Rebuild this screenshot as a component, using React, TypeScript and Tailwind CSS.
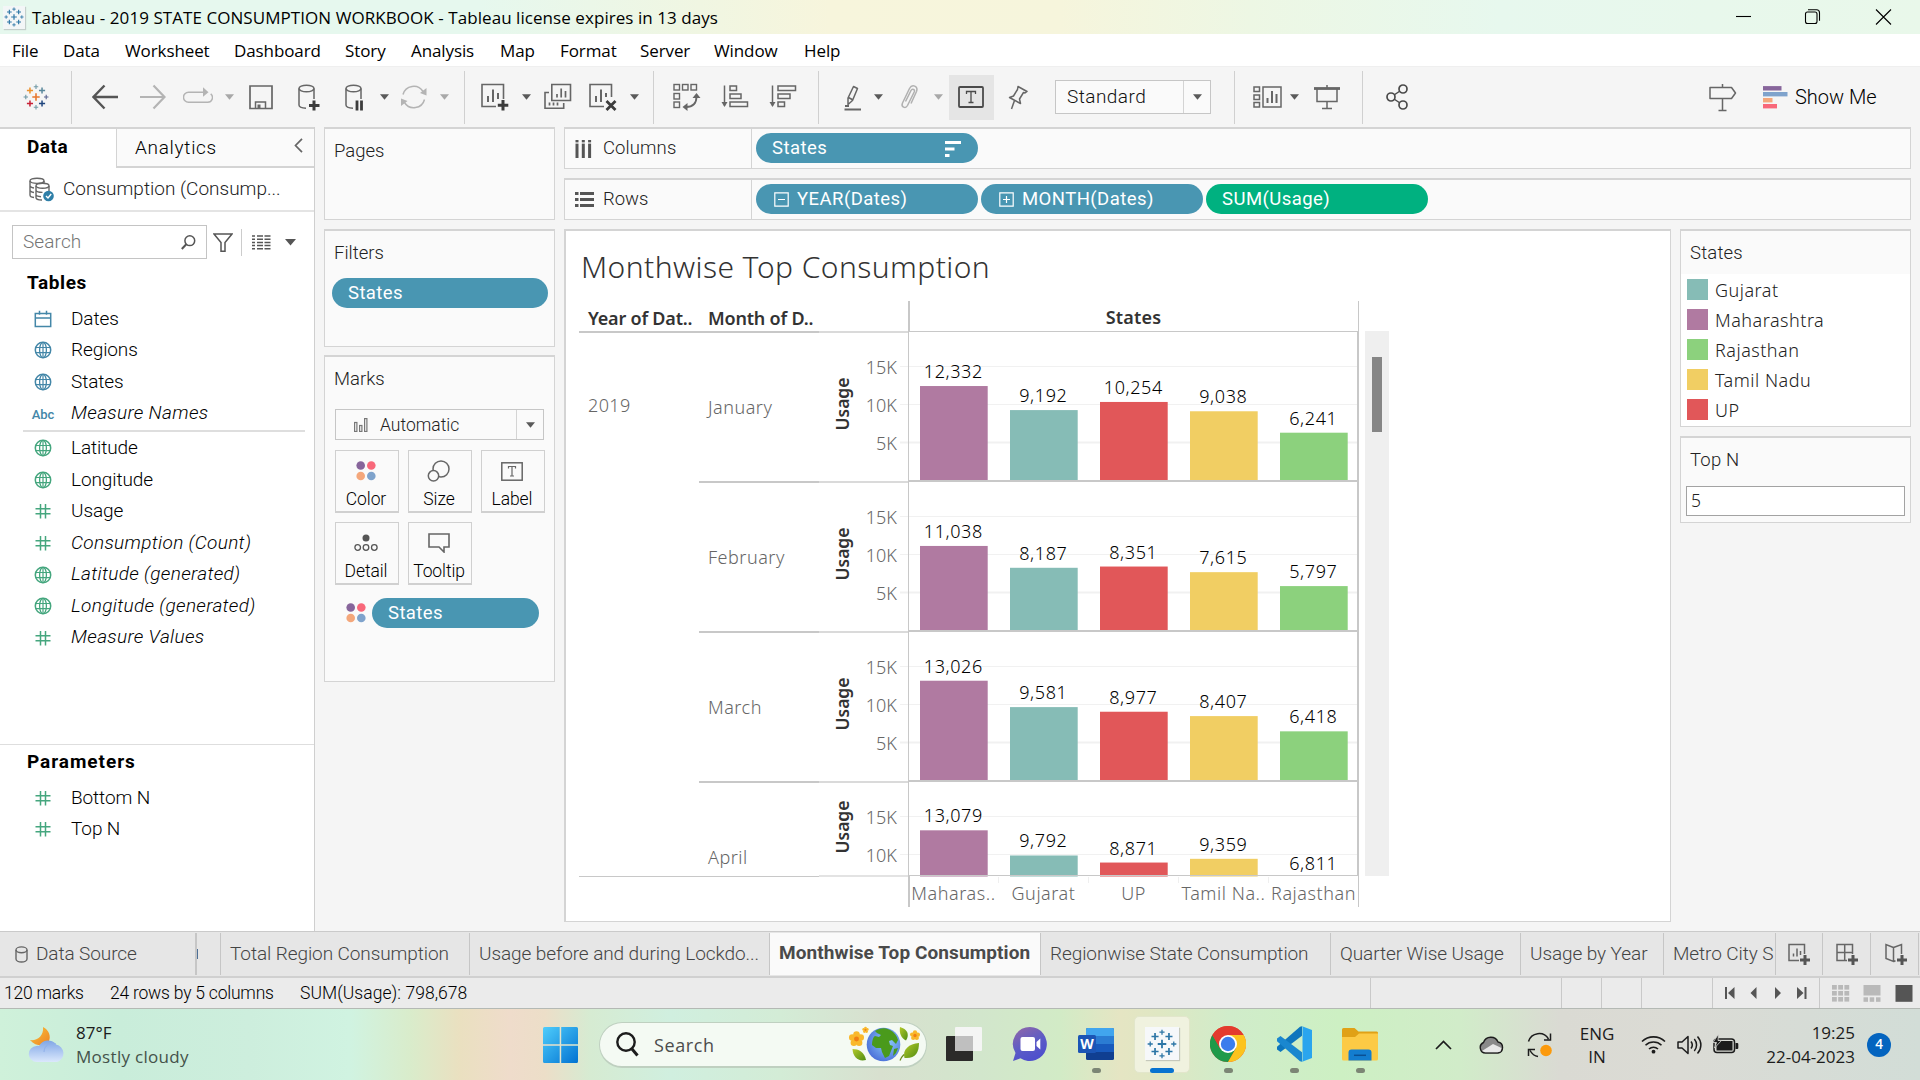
import React from "react";

/* ---------- shared helpers ---------- */

function Svg({ w, h = 30, className = "", children }: { w: number; h?: number; className?: string; children: React.ReactNode }) {
  return (
    <svg width={w} height={h} viewBox={`0 0 ${w} ${h}`} fill="none" className={`shrink-0 ${className}`}>
      {children}
    </svg>
  );
}

function Caret({ className = "", fill = "#5a5a5a" }: { className?: string; fill?: string }) {
  return (
    <svg width="9" height="6" viewBox="0 0 9 6" className={`shrink-0 ${className}`}>
      <path d="M0 0.3h9L4.5 5.8z" fill={fill} />
    </svg>
  );
}

function Sep({ className = "" }: { className?: string }) {
  return <div className={`h-[53px] w-px shrink-0 bg-[#d0d0d0] ${className}`} />;
}

const G = "#666666";

function plus(cx: number, cy: number, r: number, c: string, sw: number) {
  return <path key={`${cx}-${cy}`} d={`M${cx - r} ${cy}h${r * 2}M${cx} ${cy - r}v${r * 2}`} stroke={c} strokeWidth={sw} />;
}

function TableauMark({ size, mono = false, className = "" }: { size: number; mono?: boolean; className?: string }) {
  const b = "#2d76a6";
  const c = (x: string) => (mono ? b : x);
  return (
    <svg width={size} height={size} viewBox="0 0 28 28" fill="none" className={`shrink-0 ${className}`}>
      {plus(14, 14, 4, c("#e8762d"), 1.7)}
      {plus(7.5, 7, 3.3, c("#eb912c"), 1.6)}
      {plus(20.5, 7, 3.3, c("#59879b"), 1.6)}
      {plus(7.5, 21, 3.3, c("#c72035"), 1.6)}
      {plus(20.5, 21, 3.3, c("#1f457e"), 1.6)}
      {plus(14, 3, 2.4, c("#7199a6"), 1.2)}
      {plus(14, 25, 2.4, c("#7199a6"), 1.2)}
      {plus(3, 14, 2.4, c("#7199a6"), 1.2)}
      {plus(25, 14, 2.4, c("#5b6591"), 1.2)}
    </svg>
  );
}

/* ---------- title bar and menu ---------- */

function TitleBar() {
  return (
    <div className="flex h-[34px] items-center bg-[linear-gradient(90deg,#e6f8ee_0px,#e6f8ee_480px,#f0f6e2_700px,#f7f5dc_830px,#f6f5dc_1060px,#edf7e4_1250px,#e7f8ee_1500px,#e9f8ea_1920px)]">
      <div className="ml-[3px] flex h-[23px] w-[22px] items-center justify-center bg-[#f3f6f7] shadow-[1px_1px_1px_#c4cfcb]">
        <TableauMark size={20} mono />
      </div>
      <div className="ml-[7px] pt-[2px] font-['Open_Sans',sans-serif] text-[17px] tracking-[0.06px] text-black">
        Tableau - 2019 STATE CONSUMPTION WORKBOOK - Tableau license expires in 13 days
      </div>
      <svg width="160" height="18" viewBox="0 0 160 18" fill="none" className="ml-auto mr-[27px]" stroke="#000" strokeWidth="1.1">
        <path d="M3 8.5h15" />
        <rect x="72.5" y="4" width="11.5" height="11.5" rx="2" />
        <path d="M75 1.8h8.5a3 3 0 0 1 3 3v8" />
        <path d="M143 1.5l15 15M158 1.5l-15 15" />
      </svg>
    </div>
  );
}

function MenuBar() {
  return (
    <div className="flex h-[32px] items-center bg-white pt-px pl-[12px] font-['Open_Sans',sans-serif] text-[17px] tracking-[-0.1px] text-black">
      <span className="w-[51px]">File</span>
      <span className="w-[62px]">Data</span>
      <span className="w-[109px]">Worksheet</span>
      <span className="w-[111px]">Dashboard</span>
      <span className="w-[66px]">Story</span>
      <span className="w-[89px]">Analysis</span>
      <span className="w-[60px]">Map</span>
      <span className="w-[80px]">Format</span>
      <span className="w-[74px]">Server</span>
      <span className="w-[90px]">Window</span>
      <span>Help</span>
    </div>
  );
}

/* ---------- toolbar ---------- */

function Toolbar() {
  return (
    <div className="flex h-[61px] items-center border-t border-[#efefef] bg-[#f5f5f5]">
      <TableauMark size={26} className="ml-[23px]" />
      <Sep className="ml-[22px]" />
      <Svg w={26} className="ml-[20px]">
        <path d="M12.5 3.5L1.5 15l11 11.5M2 15h24" stroke="#555" strokeWidth="2.4" />
      </Svg>
      <Svg w={26} className="ml-[22px]">
        <path d="M13.5 3.5l11 11.5-11 11.5M0 15h24" stroke="#b4b4b4" strokeWidth="2.2" />
      </Svg>
      <Svg w={30} className="ml-[17px]">
        <path d="M21 10.300H5.500a5 5 0 0 0 0 10h19a4.800 4.800 0 0 0 3.200-8.500" stroke="#b4b4b4" strokeWidth="1.500" />
        <path d="M20 5.300l5.500 5-5.500 4.500z" fill="#b4b4b4" />
      </Svg>
      <Caret className="ml-[12px]" fill="#a8a8a8" />
      <Svg w={24} className="ml-[15px]">
        <path d="M1 4h22v22.500H1z" stroke={G} strokeWidth="1.7" />
        <path d="M6.500 26.500v-6.500h10v6.500" stroke={G} strokeWidth="1.500" />
        <path d="M8.500 22.500h3v4h-3z" fill={G} />
      </Svg>
      <Svg w={22} className="ml-[25px]">
        <ellipse cx="8.500" cy="6.500" rx="7.500" ry="3.300" stroke={G} strokeWidth="1.500" />
        <path d="M1 6.500v16.500c0 2 3.500 3 7 3.200M16 6.500V17" stroke={G} strokeWidth="1.500" />
        <path d="M16 18.500v10M11 23.500h10.500" stroke="#3c3c3c" strokeWidth="3" />
      </Svg>
      <Svg w={20} className="ml-[25px]">
        <ellipse cx="8.500" cy="6.500" rx="7.500" ry="3.300" stroke={G} strokeWidth="1.500" />
        <path d="M1 6.500v16.500c0 2 3.500 3 7 3.200M16 6.500V17" stroke={G} strokeWidth="1.500" />
        <path d="M12 18.500v10M16.500 18.500v10" stroke="#3c3c3c" strokeWidth="2.800" />
      </Svg>
      <Caret className="ml-[15px]" />
      <Svg w={26} className="ml-[12px]">
        <path d="M2 12.500A11 11 0 0 1 22 9.500M23.500 17.500A11 11 0 0 1 3.500 20.500" stroke="#b4b4b4" strokeWidth="1.500" />
        <path d="M25.500 6v7.500l-6.500-2.500zM0 24v-7.500l6.500 2.500z" fill="#b4b4b4" />
      </Svg>
      <Caret className="ml-[13px]" fill="#a8a8a8" />
      <Sep className="ml-[15px]" />
      <Svg w={28} className="ml-[16px]">
        <path d="M15 24.500H1V2.500h21.500V17" stroke={G} strokeWidth="1.600" />
        <path d="M7 20v-6M12 20V7.500M17 17v-6" stroke={G} strokeWidth="2" />
        <path d="M22 18v10.500M16.800 23.300h10.500" stroke="#3c3c3c" strokeWidth="3" />
      </Svg>
      <Caret className="ml-[13px]" />
      <Svg w={28} className="ml-[13px]">
        <path d="M7.800 2.500h18.700v16H7.800z" stroke={G} strokeWidth="1.600" />
        <path d="M5 10.500H1v15.700h18.700V21" stroke={G} strokeWidth="1.600" />
        <path d="M13 15.500v-3.500M17.200 15.500V6.500M21.500 15.500V9M5.500 23.500v-3M9.500 23.500v-3M13.500 23.500v-3" stroke={G} strokeWidth="1.700" />
      </Svg>
      <Svg w={28} className="ml-[17px]">
        <path d="M15 24.500H1V2.500h21.500V15" stroke={G} strokeWidth="1.600" />
        <path d="M7 20v-6M12 20V7.500M17 15v-4" stroke={G} strokeWidth="2" />
        <path d="M17.500 19l9 9M26.500 19l-9 9" stroke="#3c3c3c" strokeWidth="2.800" />
      </Svg>
      <Caret className="ml-[13px]" />
      <Sep className="ml-[14px]" />
      <Svg w={28} className="ml-[19px]">
        <g stroke={G} strokeWidth="1.400">
          <rect x="1" y="2.500" width="5.500" height="5.500" />
          <rect x="9.500" y="2.500" width="5.500" height="5.500" />
          <rect x="18" y="2.500" width="5.500" height="5.500" />
          <rect x="1" y="11.500" width="5.500" height="5.500" />
          <rect x="1" y="20" width="5.500" height="5.500" />
        </g>
        <path d="M13 25c7 0 10.500-4 10.500-10.500" stroke={G} strokeWidth="1.800" />
        <path d="M14.500 21v8l-5-4zM19.500 16h8l-4-5z" fill={G} />
      </Svg>
      <Svg w={28} className="ml-[20px]">
        <path d="M3.500 3.500v20" stroke={G} strokeWidth="1.500" />
        <path d="M0.500 20h6l-3 5z" fill={G} />
        <g stroke={G} strokeWidth="1.500">
          <rect x="9" y="4" width="6.500" height="4.500" />
          <rect x="9" y="12" width="11" height="4.500" />
          <rect x="9" y="20" width="17.500" height="4.500" />
        </g>
      </Svg>
      <Svg w={28} className="ml-[20px]">
        <path d="M3.500 3.500v20" stroke={G} strokeWidth="1.500" />
        <path d="M0.500 20h6l-3 5z" fill={G} />
        <g stroke={G} strokeWidth="1.500">
          <rect x="9" y="4" width="17.500" height="4.500" />
          <rect x="9" y="12" width="12" height="4.500" />
          <rect x="9" y="20" width="6.500" height="4.500" />
        </g>
      </Svg>
      <Sep className="ml-[21px]" />
      <Svg w={18} className="ml-[25px]">
        <path d="M4 16L9.500 4.500l4 2L8.500 18.500l-4.500 4zM4.500 15.500l4.500 2.500" stroke={G} strokeWidth="1.500" strokeLinejoin="round" />
        <path d="M0.500 27.500h16.500M1 24h4" stroke={G} strokeWidth="1.800" />
      </Svg>
      <Caret className="ml-[12px]" />
      <Svg w={19} className="ml-[17px]">
        <path d="M5.500 19.500L11 8.500c1.300-2.500 4.300-1 3.200 1.500L7.500 23.500c-2 3.800-6.800 1.500-5-2.500L9.500 6.500c2.700-5 9-2.300 7 3L11 21.500" stroke="#b0b0b0" strokeWidth="1.500" />
      </Svg>
      <Caret className="ml-[15px]" fill="#a8a8a8" />
      <div className="ml-[6px] flex h-[45px] w-[45px] shrink-0 items-center justify-center bg-[#e5e5e5] pr-px">
        <svg width="26" height="22" viewBox="0 0 26 22" fill="none">
          <rect x="1" y="1" width="24" height="20" rx="1" stroke="#4a4a4a" strokeWidth="1.800" />
          <path d="M8.500 8V5.500h9V8M13 5.500v11M10.500 16.500h5" stroke="#4a4a4a" strokeWidth="1.300" />
        </svg>
      </div>
      <Svg w={21} className="ml-[14px]">
        <path d="M10 4.500l9 5-2 1.500-1.500-.5-4 6.500 1 4.500-11-6 4-1.500L9.500 7.500z" stroke={G} strokeWidth="1.500" strokeLinejoin="round" />
        <path d="M6.500 18.500L3.500 27" stroke={G} strokeWidth="1.500" />
      </Svg>
      <div className="ml-[26px] flex h-[34px] w-[156px] shrink-0 items-center border border-[#c6c6c6] bg-[#fafafa]">
        <span className="w-[127px] pl-[11px] font-['Roboto',sans-serif] text-[19px] font-light tracking-[0.45px] text-[#111]">Standard</span>
        <div className="flex h-full flex-1 items-center justify-center border-l border-[#d4d4d4]">
          <Caret />
        </div>
      </div>
      <Sep className="ml-[23px]" />
      <Svg w={29} className="ml-[18px]">
        <g stroke={G} strokeWidth="1.500">
          <rect x="1" y="5" width="5.500" height="4.500" />
          <rect x="1" y="13" width="5.500" height="4.500" />
          <rect x="1" y="20.500" width="5.500" height="4.500" />
          <rect x="10" y="5" width="18" height="20" />
        </g>
        <path d="M14.500 21v-5M19 21V9M23.500 21v-9" stroke={G} strokeWidth="2" />
      </Svg>
      <Caret className="ml-[8px]" />
      <Svg w={26} className="ml-[15px]">
        <path d="M0 6.500h26" stroke={G} strokeWidth="2.800" />
        <path d="M3 7v12.500h20V7M13 3v3M13 19.500v7M8 26.500h10" stroke={G} strokeWidth="1.500" />
      </Svg>
      <Sep className="ml-[22px]" />
      <Svg w={23} className="ml-[23px]">
        <path d="M5 15l12-8M5 15l12 8" stroke="#4a4a4a" strokeWidth="1.500" />
        <g stroke="#4a4a4a" strokeWidth="1.700" fill="#f5f5f5">
          <circle cx="5" cy="15" r="4" />
          <circle cx="17" cy="7" r="4" />
          <circle cx="17" cy="23" r="4" />
        </g>
      </Svg>
      <Svg w={28} className="ml-[300px]">
        <path d="M1 5.500h21.500l4 5.500-4 5.500H1zM13.500 2v3.500M13.500 16.500v12M9.500 28.500h8" stroke={G} strokeWidth="1.500" strokeLinejoin="round" />
      </Svg>
      <Svg w={25} className="ml-[26px]">
        <path d="M0 6.300h18.500" stroke="#87659b" strokeWidth="4.400" />
        <path d="M0 12.200h24.500" stroke="#7fa3cc" strokeWidth="4.400" />
        <path d="M0 18.200h9.500" stroke="#f4a77b" strokeWidth="4.400" />
        <path d="M0 24.200h14" stroke="#f8687a" strokeWidth="4.400" />
      </Svg>
      <span className="ml-[7px] whitespace-nowrap font-['Roboto',sans-serif] text-[20px] font-light text-black">Show Me</span>
    </div>
  );
}

/* ---------- data pane ---------- */

function FieldIcon({ kind, color }: { kind: string; color: string }) {
  if (kind === "abc")
    return <span className="block w-[34px] pt-[2px] text-center font-['Roboto',sans-serif] text-[13px] font-medium" style={{ color }}>Abc</span>;
  return (
    <svg width="34" height="20" viewBox="-8.500 -1.500 34 20" fill="none" stroke={color} strokeWidth="1.500">
      {kind === "date" && <path d="M.8 3h15.400v13H.8zM.8 7.500h15.400M5 .3v4M12 .3v4" />}
      {kind === "geo" && (
        <>
          <circle cx="8.500" cy="8.500" r="7.700" />
          <ellipse cx="8.500" cy="8.500" rx="3.400" ry="7.700" strokeWidth="1.300" />
          <path d="M1.300 6h14.400M1.300 11.200h14.400M8.500 1v15" strokeWidth="1.200" />
        </>
      )}
      {kind === "num" && <path d="M6 1.500v14.500M11 1.500v14.500M1 6.300h15M1 11.300h15" strokeWidth="1.500" />}
    </svg>
  );
}

function Field({ kind, green, italic, label }: { kind: string; green?: boolean; italic?: boolean; label: string }) {
  return (
    <div className="flex h-[31.6px] items-center pl-[26px]">
      <FieldIcon kind={kind} color={green ? "#45a67e" : "#4487a8"} />
      <span className={italic ? "ml-[11px] text-[19px] tracking-[0.33px] italic" : "ml-[11px] text-[19px] tracking-[-0.1px]"}>{label}</span>
    </div>
  );
}

function DataPane() {
  return (
    <div className="flex w-[315px] shrink-0 flex-col border-r border-[#cfcfcf] bg-white text-black">
      <div className="flex h-[41px] border-t-2 border-[#d4d4d4]">
        <div className="w-[116px] pl-[27px] text-[19px] leading-[36px] font-bold tracking-[0.5px]">Data</div>
        <div className="flex flex-1 items-center border-b-2 border-l border-[#d4d4d4] bg-[#fafafa] pl-[18px] text-[19px]">
          <span className="pt-px tracking-[0.7px]">Analytics</span>
          <svg width="9" height="15" viewBox="0 0 9 15" fill="none" className="mr-[11px] mb-1 ml-auto">
            <path d="M8 .8L1.500 7.500 8 14.200" stroke="#666" strokeWidth="1.700" />
          </svg>
        </div>
      </div>
      <div className="flex h-[44px] items-center border-b-2 border-[#e4e4e4] pl-[29px]">
        <svg width="26" height="25" viewBox="0 0 26 25" fill="none" stroke="#666" strokeWidth="1.400">
          <ellipse cx="8" cy="3.800" rx="7" ry="2.600" />
          <path d="M1 4v14c0 1.500 2 2.300 4 2.500M15 4v2M1 8.500c0 1.500 2 2.200 4 2.500M1 13c0 1.500 2 2.200 4 2.500" />
          <ellipse cx="13.500" cy="8.800" rx="6.500" ry="2.500" fill="#fff" />
          <path d="M7 9v11.500c0 1.500 3 2.500 6 2.500M20 9v5M7 13c0 1.500 3 2.400 6.500 2.400M7 17.500c0 1.200 2.500 2 5 2.200" />
          <circle cx="19.500" cy="19" r="5.300" fill="#2f7fa8" stroke="none" />
          <path d="M17 19l2 2 3.200-4" stroke="#fff" />
        </svg>
        <span className="ml-[8px] text-[19px] text-[#222]">Consumption (Consump...</span>
      </div>
      <div className="mt-[13px] flex h-[34px] items-center pl-[12px]">
        <div className="flex h-full w-[195px] items-center border border-[#c4c4c4] pr-[10px] pl-[10px]">
          <span className="text-[19px] tracking-[0.1px] text-[#757575]">Search</span>
          <svg width="15" height="15" viewBox="0 0 15 15" fill="none" className="ml-auto" stroke="#555" strokeWidth="1.500">
            <circle cx="8.800" cy="5.700" r="4.900" />
            <path d="M5.300 9.200L.8 14" strokeWidth="2" />
          </svg>
        </div>
        <svg width="20" height="19" viewBox="0 0 20 19" fill="none" className="ml-[6px]" stroke="#555" strokeWidth="1.500">
          <path d="M1 1h18l-7 8.500v8.700H8V9.500z" />
        </svg>
        <div className="ml-[8px] h-[27px] w-px bg-[#ccc]" />
        <svg width="19" height="15" viewBox="0 0 19 15" className="ml-[10px]" stroke="#555" strokeWidth="1.500">
          {[1, 4.200, 7.400, 10.600, 13.800].map((y) => (
            <path key={y} d={`M0 ${y}h3M5 ${y}h6M12.500 ${y}h6`} />
          ))}
        </svg>
        <svg width="11" height="7" viewBox="0 0 11 7" className="ml-[14px]">
          <path d="M0 0h11L5.500 6.500z" fill="#555" />
        </svg>
      </div>
      <div className="h-[44px] pl-[27px] text-[19px] leading-[47px] font-bold tracking-[0.6px]">Tables</div>
      <Field kind="date" label="Dates" />
      <Field kind="geo" label="Regions" />
      <Field kind="geo" label="States" />
      <Field kind="abc" italic label="Measure Names" />
      <div className="mt-px mr-[9px] ml-[23px] h-[2px] shrink-0 bg-[#dedede]" />
      <Field kind="geo" green label="Latitude" />
      <Field kind="geo" green label="Longitude" />
      <Field kind="num" green label="Usage" />
      <Field kind="num" green italic label="Consumption (Count)" />
      <Field kind="geo" green italic label="Latitude (generated)" />
      <Field kind="geo" green italic label="Longitude (generated)" />
      <Field kind="num" green italic label="Measure Values" />
      <div className="mt-auto h-[187px] border-t border-[#dedede]">
        <div className="mb-[3px] h-[34px] pl-[27px] text-[19px] leading-[34px] font-bold tracking-[0.95px]">Parameters</div>
        <Field kind="num" green label="Bottom N" />
        <Field kind="num" green label="Top N" />
      </div>
    </div>
  );
}

/* ---------- cards ---------- */

const cardCls = "border border-t-2 border-[#d4d4d4] bg-[#fafafa]";

function Dots() {
  return (
    <svg width="20" height="20" viewBox="0 0 20 20">
      <circle cx="4.700" cy="4.500" r="4.300" fill="#87659b" />
      <circle cx="15.300" cy="4.500" r="4.300" fill="#f8687a" />
      <circle cx="4.700" cy="15" r="4.300" fill="#f4a77b" />
      <circle cx="15.300" cy="15" r="4.300" fill="#7fa3cc" />
    </svg>
  );
}

function MarkButton({ label, children }: { label: string; children: React.ReactNode }) {
  return (
    <div className="flex h-[63px] w-[64px] flex-col items-center border border-b-2 border-[#d0d0d0] pr-[2px] text-black">
      <div className="mt-[8px] flex h-[24px] items-center">{children}</div>
      <div className="mt-[4px] text-[17.500px] leading-[24px] tracking-[-0.1px] whitespace-nowrap">{label}</div>
    </div>
  );
}

function CardsColumn() {
  return (
    <div className="ml-[9px] flex w-[231px] shrink-0 flex-col text-[#222]">
      <div className={`${cardCls} h-[93px] pl-[9px] text-[18.500px] leading-[45px]`}>Pages</div>
      <div className={`${cardCls} mt-[9px] h-[118px]`}>
        <div className="h-[47px] pl-[9px] text-[18.500px] leading-[45px]">Filters</div>
        <div className="ml-[7px] h-[30px] w-[216px] rounded-full bg-[#4996b2] pl-[16px] text-[18.500px] leading-[31px] font-normal tracking-[0.4px] text-white">States</div>
      </div>
      <div className={`${cardCls} mt-[8px] h-[327px]`}>
        <div className="h-[52px] pl-[9px] text-[18.500px] leading-[45px]">Marks</div>
        <div className="ml-[10px] flex h-[31px] w-[209px] items-center border border-[#c6c6c6]">
          <svg width="14" height="14" viewBox="0 0 14 14" fill="none" stroke="#777" strokeWidth="1.200" className="ml-[18px]">
            <rect x=".6" y="4.500" width="2.300" height="9" />
            <rect x="5.600" y="7.500" width="2.300" height="6" />
            <rect x="10.600" y=".6" width="2.300" height="12.900" />
          </svg>
          <span className="ml-[12px] pt-px text-[17.500px]">Automatic</span>
          <div className="ml-auto flex h-full w-[27px] items-center justify-center border-l border-[#d4d4d4]">
            <Caret />
          </div>
        </div>
        <div className="mt-[10px] ml-[10px] grid w-[210px] grid-cols-[64px_64px_64px] gap-x-[9px] gap-y-[9px]">
          <MarkButton label="Color"><Dots /></MarkButton>
          <MarkButton label="Size">
            <svg width="24" height="22" viewBox="0 0 24 22" fill="#fafafa" stroke="#666" strokeWidth="1.500">
              <circle cx="14" cy="9" r="8" />
              <circle cx="6.500" cy="15.800" r="5.200" />
            </svg>
          </MarkButton>
          <MarkButton label="Label">
            <svg width="22" height="19" viewBox="0 0 22 19" fill="none" stroke="#666">
              <rect x=".8" y=".8" width="20.400" height="17.400" strokeWidth="1.500" />
              <path d="M7.500 6.500v-2h7v2M11 4.500v9.500M9 14h4" strokeWidth="1.200" />
            </svg>
          </MarkButton>
          <MarkButton label="Detail">
            <svg width="24" height="18" viewBox="0 0 24 18" fill="none" stroke="#555" strokeWidth="1.300">
              <circle cx="12" cy="4" r="3.500" fill="#555" stroke="none" />
              <circle cx="3.700" cy="13.500" r="2.800" />
              <circle cx="12" cy="13.500" r="2.800" />
              <circle cx="20.300" cy="13.500" r="2.800" />
            </svg>
          </MarkButton>
          <MarkButton label="Tooltip">
            <svg width="22" height="20" viewBox="0 0 22 20" fill="none" stroke="#666" strokeWidth="1.600">
              <path d="M1 1h20v13h-5v5l-5-5H1z" />
            </svg>
          </MarkButton>
        </div>
        <div className="mt-[13px] ml-[21px] flex items-center">
          <Dots />
          <div className="ml-[6px] h-[30px] w-[167px] rounded-full bg-[#4996b2] pl-[16px] text-[18.500px] leading-[30px] font-normal tracking-[0.4px] text-white">States</div>
        </div>
      </div>
    </div>
  );
}

/* ---------- shelves ---------- */

function Shelves() {
  const pill = "flex h-[30px] w-[222px] items-center rounded-full pt-px text-[18.500px] font-normal tracking-[0.45px] text-white";
  return (
    <>
      <div className={`${cardCls} flex h-[42px] items-center`}>
        <div className="flex h-full w-[187px] items-center border-r border-[#d4d4d4] pl-[10px] text-[18.500px] text-[#222]">
          <svg width="17" height="18" viewBox="0 0 17 18" stroke="#555" strokeWidth="3">
            <path d="M2 0v18M8.300 0v18M14.600 0v18" />
            <path d="M0 3h17" stroke="#fafafa" strokeWidth="1.200" />
          </svg>
          <span className="ml-[11px] pt-px tracking-[0.1px]">Columns</span>
        </div>
        <div className={`${pill} mb-px ml-[4px] bg-[#4996b2] pr-[17px] pl-[16px]`}>
          <span>States</span>
          <svg width="16" height="16" viewBox="0 0 16 16" className="ml-auto" stroke="#fff" strokeWidth="3">
            <path d="M0 1.500h16M0 8h9.500M0 14.500h4.500" />
          </svg>
        </div>
      </div>
      <div className={`${cardCls} mt-[9px] flex h-[42px] items-center`}>
        <div className="flex h-full w-[187px] items-center border-r border-[#d4d4d4] pl-[10px] text-[18.500px] text-[#222]">
          <svg width="19" height="15" viewBox="0 0 19 15" stroke="#555" strokeWidth="3">
            <path d="M0 1.500h3.500M5 1.500h14M0 7.500h3.500M5 7.500h14M0 13.500h3.500M5 13.500h14" />
          </svg>
          <span className="ml-[9px] pt-px">Rows</span>
        </div>
        <div className={`${pill} mb-px ml-[4px] bg-[#4996b2] pl-[18px]`}>
          <svg width="15" height="15" viewBox="0 0 15 15" fill="none" stroke="#fff" strokeWidth="1.200">
            <path d="M.8.8h13.400v13.400H.8zM4 7.500h7" />
          </svg>
          <span className="ml-[8px]">YEAR(Dates)</span>
        </div>
        <div className={`${pill} mb-px ml-[3px] bg-[#4996b2] pl-[18px]`}>
          <svg width="15" height="15" viewBox="0 0 15 15" fill="none" stroke="#fff" strokeWidth="1.200">
            <path d="M.8.8h13.400v13.400H.8zM4 7.500h7M7.500 4v7" />
          </svg>
          <span className="ml-[8px]">MONTH(Dates)</span>
        </div>
        <div className={`${pill} mb-px ml-[3px] bg-[#00b180] pl-[16px]`}>SUM(Usage)</div>
      </div>
    </>
  );
}

/* ---------- bar chart ---------- */

const barColors = ["#b07aa1", "#86bcb6", "#e15759", "#f1ce63", "#8cd17d"];
const months: { name: string; values: number[] }[] = [
  { name: "January", values: [12332, 9192, 10254, 9038, 6241] },
  { name: "February", values: [11038, 8187, 8351, 7615, 5797] },
  { name: "March", values: [13026, 9581, 8977, 8407, 6418] },
  { name: "April", values: [13079, 9792, 8871, 9359, 6811] },
];
const stateLabels = ["Maharas..", "Gujarat", "UP", "Tamil Na..", "Rajasthan"];

function Chart() {
  const font = "'Noto Sans', 'Open Sans', sans-serif";
  const line = "#c8c8c8";
  return (
    <svg width="1104" height="690" viewBox="566 231 1104 690" fontFamily={font} fontSize="18" fontWeight="300" shapeRendering="auto">
      <defs>
        <clipPath id="plot">
          <rect x="566" y="332" width="800" height="544.500" />
        </clipPath>
      </defs>
      <text x="581" y="278" fontSize="30" letterSpacing="0.430" fill="#333">Monthwise Top Consumption</text>
      <g fontWeight="600" fill="#333">
        <text x="588" y="325" letterSpacing="-0.200">Year of Dat..</text>
        <text x="708" y="325" letterSpacing="-0.200">Month of D..</text>
        <text x="1133.500" y="324" textAnchor="middle" letterSpacing="0.200">States</text>
      </g>
      <g clipPath="url(#plot)">
        {months.map((m, i) => {
          const top = 331.500 + i * 150;
          const zero = top + 149;
          return (
            <g key={m.name}>
              {[15, 10, 5].map((k, j) => {
                const y = Math.round(top + 34 + j * 38.300) + 0.5;
                return (
                  <g key={k}>
                    <path d={`M900 ${y}H1357`} stroke="#f1f1f1" strokeWidth={k === 5 ? 1.800 : 1} />
                    <text x="896.800" y={y + 7} textAnchor="end" fill="#666">{k}K</text>
                  </g>
                );
              })}
              {m.values.map((v, s) => {
                const h = v * 0.00766;
                return (
                  <g key={s}>
                    <rect x={920 + s * 90} y={zero - h} width="67.700" height={h} fill={barColors[s]} />
                    <text x={953.300 + s * 90} y={zero - h - 8} textAnchor="middle" letterSpacing="0.600" fill="#000">{v.toLocaleString("en-US")}</text>
                  </g>
                );
              })}
              {i < 3 && (
                <>
                  <path d={`M699 ${zero + 1.500}H819`} stroke={line} strokeWidth="1.800" />
                  <path d={`M819 ${zero + 1.500}H908`} stroke="#dadada" strokeWidth="1.800" />
                  <path d={`M908 ${zero + 0.500}H1358`} stroke={line} strokeWidth="2" />
                </>
              )}
              <text x="708" y={i === 3 ? 864 : top + 82.500} letterSpacing="0.500" fill="#666">{m.name}</text>
              <text
                transform={`translate(849 ${i === 3 ? 827 : top + 72.500}) rotate(-90)`}
                textAnchor="middle"
                fontWeight="600"
                fontSize="17.500"
                fill="#333"
              >
                Usage
              </text>
            </g>
          );
        })}
      </g>
      <text x="588" y="412" letterSpacing="0.400" fill="#666">2019</text>
      <g stroke={line}>
        <path d="M579 332H819" strokeWidth="1.800" />
        <path d="M819 332H908" stroke="#dadada" strokeWidth="1.800" />
        <path d="M908 331.500H1358" />
        <path d="M909 301V332" strokeWidth="2" />
        <path d="M908.500 332V876" />
        <path d="M1358.500 301V876" />
        <path d="M1357.800 332V876" strokeWidth="1.600" />
        <path d="M579 876.500H819M908 875.500H1358" />
        <path d="M819 876H908" stroke="#dadada" strokeWidth="1.600" />
        <path d="M909 876V907" strokeWidth="2" />
        <path d="M1358.500 876V907" />
        <path d="M998.500 877v6M1088.500 877v6M1178.500 877v6M1268.500 877v6" stroke="#efefef" />
      </g>
      <g fill="#666" textAnchor="middle">
        {stateLabels.map((s, i) => (
          <text key={s} x={953.500 + i * 90} y="899.500" letterSpacing="0.550">{s}</text>
        ))}
      </g>
      <rect x="1365" y="331" width="24" height="545" fill="#efefef" />
      <rect x="1372" y="357" width="10" height="75" fill="#868686" />
    </svg>
  );
}

/* ---------- legend and parameter cards ---------- */

const legend: [string, string][] = [
  ["Gujarat", "bg-[#86bcb6]"],
  ["Maharashtra", "bg-[#b07aa1]"],
  ["Rajasthan", "bg-[#8cd17d]"],
  ["Tamil Nadu", "bg-[#f1ce63]"],
  ["UP", "bg-[#e15759]"],
];

function RightCards() {
  return (
    <div className="ml-[9px] flex w-[231px] flex-col text-[#222]">
      <div className={`${cardCls} h-[198px]`}>
        <div className="h-[43px] pl-[9px] text-[18.500px] leading-[45px] tracking-[0.2px]">States</div>
        <div className="h-[152px] bg-white pt-[5px] pl-[6px]">
          {legend.map(([name, bg]) => (
            <div key={name} className="flex h-[30px] items-start font-['Noto_Sans',sans-serif] text-[18px] tracking-[0.5px]">
              <div className={`h-[21px] w-[21px] ${bg}`} />
              <span className="ml-[7px] leading-[22px] font-light">{name}</span>
            </div>
          ))}
        </div>
      </div>
      <div className={`${cardCls} mt-[9px] h-[87px]`}>
        <div className="h-[48px] pl-[9px] text-[18.500px] leading-[45px] tracking-[0.2px]">Top N</div>
        <div className="ml-[5px] h-[30px] w-[219px] border-[1.500px] border-[#a3a3a3] bg-white pl-[4px] font-['Noto_Sans',sans-serif] text-[17.500px] leading-[27px]">5</div>
      </div>
    </div>
  );
}

/* ---------- sheet tabs and status bar ---------- */

function SheetTabs() {
  const tab = "flex h-[42px] shrink-0 items-center overflow-hidden whitespace-nowrap border-r border-[#c6c6c6]";
  return (
    <div className="flex h-[47px] items-center border-t border-b-2 border-t-[#cacaca] border-b-[#d0d0d0] bg-[#e6e6e6] text-[19px] tracking-[-0.09px] text-[#444]">
      <div className={`${tab} w-[197px] border-r-2 pl-[15px]`}>
        <svg width="13" height="17" viewBox="0 0 13 17" fill="none" stroke="#666" strokeWidth="1.400">
          <ellipse cx="6.500" cy="3.800" rx="5.500" ry="2.900" />
          <path d="M1 4v9c0 1.700 2.500 3 5.500 3s5.500-1.300 5.500-3V4" />
        </svg>
        <span className="ml-[8px] pt-px">Data Source</span>
      </div>
      <div className={`${tab} w-[24px]`}>
        <div className="h-[10px] w-px bg-[#4d6f96]" />
      </div>
      <div className={`${tab} w-[249px] pt-px pl-[9px]`}>Total Region Consumption</div>
      <div className={`${tab} w-[300px] pt-px pl-[9px]`}>Usage before and during Lockdo...</div>
      <div className={`${tab} w-[271px] bg-[#fafafa] pb-[2px] pl-[9px] font-bold tracking-[0.1px] text-[#4a4a4a]`}>Monthwise Top Consumption</div>
      <div className={`${tab} w-[290px] pt-px pl-[9px]`}>Regionwise State Consumption</div>
      <div className={`${tab} w-[190px] pt-px pl-[9px]`}>Quarter Wise Usage</div>
      <div className={`${tab} w-[143px] pt-px pl-[9px]`}>Usage by Year</div>
      <div className={`${tab} w-[112px] pt-px pl-[9px]`}>Metro City S</div>
      <div className={`${tab} w-[47px] justify-center`}>
        <svg width="23" height="23" viewBox="0 0 23 23" fill="none" stroke="#666" strokeWidth="1.500">
          <path d="M11 17.500H1V1.500h15.500V11M5.500 13.500v-3M9 13.500v-8M12.500 12V8" />
          <path d="M17 12v10M12 17h10" stroke="#555" strokeWidth="3" />
        </svg>
      </div>
      <div className={`${tab} w-[48px] justify-center`}>
        <svg width="23" height="23" viewBox="0 0 23 23" fill="none" stroke="#666" strokeWidth="1.500" className="ml-[2px]">
          <path d="M11 17.500H1V1.500h15.500V11M8.700 1.500v16M1 9.500h15.500" />
          <path d="M17 12v10M12 17h10" stroke="#555" strokeWidth="3" />
        </svg>
      </div>
      <div className={`${tab} w-[48px] justify-center`}>
        <svg width="23" height="23" viewBox="0 0 23 23" fill="none" stroke="#666" strokeWidth="1.500" className="ml-[3px]">
          <path d="M8.500 4.500L1 1.500v14l7.500 3zM8.500 4.500l8-3V11M8.500 18.500l2-.8" />
          <path d="M17 12v10M12 17h10" stroke="#555" strokeWidth="3" />
        </svg>
      </div>
    </div>
  );
}

function StatusBar() {
  return (
    <div className="flex h-[31px] items-center border-b border-[#b4b9b4] bg-[#ebebeb] text-[17.500px] text-black">
      <span className="w-[106px] pt-px pl-[4px] tracking-[-0.22px]">120 marks</span>
      <span className="w-[190px] pt-px pl-[4px] tracking-[-0.22px]">24 rows by 5 columns</span>
      <span className="pt-px pl-[4px] tracking-[0.05px]">SUM(Usage): 798,678</span>
      <div className="ml-auto flex h-full">
        <div className="w-[191px] border-l border-[#c9c9c9]" />
        <div className="w-[40px] border-l border-[#c9c9c9]" />
        <div className="w-[40px] border-l border-[#c9c9c9]" />
        <div className="w-[71px] border-l border-[#c9c9c9]" />
        <div className="flex w-[107px] items-center border-l border-[#c9c9c9] pl-[12px]">
          <svg width="84" height="12" viewBox="0 0 84 12" fill="#555">
            <path d="M0 0h2v12H0zM9.500 0v12L3 6zM31.500 0v12l-6-6zM50 0v12l6-6zM72 0v12l6.500-6zM79.500 0h2v12h-2z" />
          </svg>
        </div>
        <div className="flex w-[101px] items-center border-l border-[#c9c9c9] pl-[12px]">
          <svg width="84" height="17" viewBox="0 0 84 17" fill="#b9b9b9">
            {[0, 6.200, 12.400].map((x) => [0, 6, 12].map((y) => <rect key={`${x}${y}`} x={x} y={y} width="4.800" height="4.600" />))}
            <rect x="31.500" y="0" width="17" height="10.500" />
            <rect x="31.500" y="12.300" width="4.500" height="4.500" />
            <rect x="37.700" y="12.300" width="4.500" height="4.500" />
            <rect x="44" y="12.300" width="4.500" height="4.500" />
            <rect x="63.500" y="0" width="17" height="16.800" fill="#555" />
          </svg>
        </div>
      </div>
    </div>
  );
}

/* ---------- Windows taskbar ---------- */

function Leaf({ d }: { d: string }) {
  return <path d={d} fill="url(#leaf)" />;
}

function Flower({ x, y, r }: { x: number; y: number; r: number }) {
  return (
    <g>
      {[0, 1, 2, 3, 4].map((i) => {
        const a = (i * 72 - 90) * (Math.PI / 180);
        return <circle key={i} cx={x + Math.cos(a) * r} cy={y + Math.sin(a) * r} r={r * 0.72} fill="#f9b82b" />;
      })}
      <circle cx={x} cy={y} r={r * 0.55} fill="#f07f13" />
    </g>
  );
}

function AppSlot({ className, children, dot }: { className: string; children: React.ReactNode; dot?: boolean }) {
  return (
    <div className={`flex h-[71px] w-[38px] shrink-0 flex-col items-center ${className}`}>
      <div className="mt-[16px] flex h-[38px] items-center">{children}</div>
      {dot && <div className="mt-[5px] h-[5px] w-[9px] shrink-0 rounded-full bg-[#7c8675]" />}
    </div>
  );
}

function Taskbar() {
  return (
    <div className="flex h-[71px] items-center bg-[linear-gradient(90deg,#cff1da_0px,#c9edda_120px,#cdeedd_250px,#d0f3e1_350px,#d9eccb_410px,#eae0c0_460px,#efdccb_510px,#ecdec8_545px,#d6ebd2_590px,#d0efdf_670px,#d3ecd6_780px,#d8e0cf_880px,#d2e6cc_980px,#d2ebc6_1060px,#e5e5c3_1120px,#dfe7c3_1160px,#d0ecca_1230px,#cdf0c3_1340px,#d1ecc9_1460px,#dadad3_1560px,#dbdbd5_1680px,#d2ddd7_1920px)] font-['Open_Sans',sans-serif] text-[#1c1c1c]">
      <svg width="38" height="38" viewBox="0 0 38 38" className="ml-[28px] shrink-0">
        <defs>
          <linearGradient id="cloud" x1="0" y1="0" x2="0" y2="1">
            <stop offset="0" stopColor="#7fa6e6" />
            <stop offset="1" stopColor="#dbe8fc" />
          </linearGradient>
          <linearGradient id="moon" x1="0" y1="0" x2="1" y2="1">
            <stop offset="0" stopColor="#f8c33c" />
            <stop offset="1" stopColor="#ee8423" />
          </linearGradient>
        </defs>
        <path d="M15 1c6 3 8 9 6 14-2 5-12 7-19-1 7 1 14-4 13-13z" fill="url(#moon)" />
        <path d="M9 36a8 8 0 0 1-.5-16 4 4 0 0 1 2.500 0 10 10 0 0 1 17-1.500A9 9 0 0 1 29 36z" fill="url(#cloud)" />
        <path d="M16 26c0-6 6-11 12-8" fill="none" stroke="#8fb0ea" strokeWidth="1" />
      </svg>
      <div className="ml-[10px] w-[467px] shrink-0 text-[17px] leading-[24px]">
        <div>87°F</div>
        <div className="tracking-[0.3px] text-[#44524a]">Mostly cloudy</div>
      </div>
      <svg width="35" height="36" viewBox="0 0 35 36" className="shrink-0">
        <defs>
          <linearGradient id="win" x1="0" y1="0" x2="1" y2="1">
            <stop offset="0" stopColor="#4fcdfb" />
            <stop offset="1" stopColor="#0172d2" />
          </linearGradient>
        </defs>
        <path d="M1.500 0H16.700v17.200H0V1.500A1.500 1.500 0 0 1 1.500 0zM18.200 0h15.300A1.500 1.500 0 0 1 35 1.500v15.700H18.200zM0 18.700h16.700V36H1.500A1.500 1.500 0 0 1 0 34.500zM18.200 18.700H35v15.800a1.500 1.500 0 0 1-1.500 1.500H18.200z" fill="url(#win)" />
      </svg>
      <div className="ml-[21px] flex h-[46px] w-[328px] shrink-0 items-center rounded-full border border-b-2 border-[#bfd0c0] bg-[#f4faf3]">
        <svg width="24" height="26" viewBox="0 0 24 26" fill="none" stroke="#1c1c1c" className="ml-[15px]">
          <circle cx="11" cy="11" r="8.700" strokeWidth="2.400" />
          <path d="M17 18l5.500 6.500" strokeWidth="3" />
        </svg>
        <span className="ml-[15px] pt-[2px] text-[18px] tracking-[0.6px] text-[#4c4c4c]">Search</span>
        <svg width="72" height="36" viewBox="0 0 72 36" className="mr-[6px] ml-auto">
          <defs>
            <linearGradient id="leaf" x1="0" y1="0" x2="1" y2="1">
              <stop offset="0" stopColor="#b4c92a" />
              <stop offset="1" stopColor="#4f8d12" />
            </linearGradient>
            <radialGradient id="sea" cx="0.6" cy="0.4" r="0.700">
              <stop offset="0" stopColor="#8fd0fb" />
              <stop offset="1" stopColor="#4668d6" />
            </radialGradient>
          </defs>
          <Flower x={8.500} y={13} r={4.500} />
          <Flower x={17.500} y={4} r={1.900} />
          <Flower x={67} y={9.500} r={3} />
          <Leaf d="M4.500 23c6 0 12 3 13.500 11-8 2-13-3-13.500-11z" />
          <Leaf d="M52 1c7 2 10 7 6 13.500C53 12 51 7 52 1z" />
          <path d="M52 34.500c1-3 3-5 4-6" stroke="#6b8a1a" strokeWidth="1.200" fill="none" />
          <Leaf d="M71 17c0 10-4 16-14.500 15C54 24 61 17.500 71 17z" />
          <circle cx="35.500" cy="18.500" r="16.800" fill="url(#sea)" />
          <path d="M27 5c4-3 10-4 15-1 4 2 7 6 8 10l-2 4-4-4-3 1 1 4 3 1-2 5-2 5-4 2-3-6-1-4-5 0-4-3c0-4 1-8 3-9l4 1 2-2-4-2z" fill="#4a9a1c" />
          <path d="M46 23l4-1-2 5-3 3z" fill="#4a9a1c" />
        </svg>
      </div>
      <AppSlot className="ml-[18px]">
        <svg width="36" height="34" viewBox="0 0 36 34">
          <rect x="0" y="9" width="27" height="25" rx="1" fill="#2b2a29" />
          <rect x="9" y="0" width="27" height="24" rx="1" fill="#f6f6f6" opacity=".95" />
          <rect x="9" y="9" width="18" height="15" fill="#bfbfbf" />
        </svg>
      </AppSlot>
      <AppSlot className="ml-[28px]">
        <svg width="36" height="36" viewBox="0 0 36 36">
          <defs>
            <linearGradient id="chat" x1="0" y1="0" x2="0.500" y2="1">
              <stop offset="0" stopColor="#9468a6" />
              <stop offset="0.600" stopColor="#5c5cc6" />
              <stop offset="1" stopColor="#4f50cc" />
            </linearGradient>
          </defs>
          <path d="M18 1a17 17 0 1 1-9.500 31.200L1 35l2.500-8A17 17 0 0 1 18 1z" fill="url(#chat)" />
          <rect x="8.500" y="11" width="14.500" height="14" rx="2" fill="#fff" />
          <path d="M24.500 16l3.800-3.500v11L24.500 20z" fill="#fff" />
        </svg>
      </AppSlot>
      <AppSlot className="ml-[28px]" dot>
        <svg width="37" height="34" viewBox="0 0 37 34">
          <rect x="8" y="1" width="28" height="32" rx="1.500" fill="#103f91" />
          <path d="M9.500 1h25A1.500 1.500 0 0 1 36 2.500V9H8V2.500A1.500 1.500 0 0 1 9.500 1z" fill="#41a5ee" />
          <path d="M8 9h28v8H8z" fill="#2b7cd3" />
          <path d="M8 17h28v8H8z" fill="#185abd" />
          <rect x="0" y="8" width="18" height="18" rx="1.500" fill="#1b55b5" />
          <text x="9" y="22" fontSize="14" fontWeight="700" fill="#fff" textAnchor="middle" fontFamily="'Open Sans', sans-serif">W</text>
        </svg>
      </AppSlot>
      <div className="ml-[19px] flex h-[57px] w-[56px] shrink-0 flex-col items-center rounded-[5px] border border-[#e2e6cb] bg-[#f0f2df]">
        <div className="mt-[10px] flex h-[33px] w-[34px] shrink-0 items-center justify-center bg-[#f6f8fa] shadow-[1px_1px_1px_#c5c8bb]">
          <TableauMark size={30} mono />
        </div>
        <div className="mt-[8px] h-[5px] w-[24px] shrink-0 rounded-full bg-[#0873d0]" />
      </div>
      <AppSlot className="ml-[19px]" dot>
        <svg width="36" height="36" viewBox="0 0 36 36">
          <circle cx="18" cy="18" r="18" fill="#ea4335" />
          <path d="M2.400 9A18 18 0 0 0 18 36l7.800-13.500H10.200z" fill="#1e9a49" />
          <path d="M33.600 9A18 18 0 0 1 18 36l7.800-13.500L18 9z" fill="#fcc31e" />
          <path d="M2.400 9A18 18 0 0 1 33.600 9H18l-7.800 13.500z" fill="#e33b2e" />
          <circle cx="18" cy="18" r="9" fill="#fff" />
          <circle cx="18" cy="18" r="7.200" fill="#3b7ded" />
        </svg>
      </AppSlot>
      <AppSlot className="ml-[28px]" dot>
        <svg width="36" height="36" viewBox="0 0 36 36">
          <path d="M26 .3v9.500L4.500 26 1 23.500v-2.800L24 .8z" fill="#0e76bd" />
          <path d="M26 35.700v-9.500L4.500 10 1 12.500v2.800L24 35.200z" fill="#1a87cf" />
          <path d="M25.500 0L36 4v28l-10.500 4c.8-.3 1-1 1-2V2c0-1-.2-1.700-1-2z" fill="#2aa5ee" />
        </svg>
      </AppSlot>
      <AppSlot className="ml-[28px]" dot>
        <svg width="36" height="33" viewBox="0 0 36 33">
          <path d="M0 1.500A1.500 1.500 0 0 1 1.500 0h11l4 3.500H34A1.500 1.500 0 0 1 36 5v6H0z" fill="#e0a116" />
          <path d="M0 9h13l4-3.500h19V31a1.500 1.500 0 0 1-1.500 1.500h-33A1.500 1.500 0 0 1 0 31z" fill="#fcca45" />
          <path d="M6.500 32.500v-8a3 3 0 0 1 3-3h17a3 3 0 0 1 3 3v8z" fill="#137dcf" />
          <path d="M12 27.300h12" stroke="#0a4f93" strokeWidth="1.500" />
        </svg>
      </AppSlot>
      <svg width="17" height="10" viewBox="0 0 17 10" fill="none" className="ml-[56px] shrink-0" stroke="#1c1c1c" strokeWidth="1.700">
        <path d="M1 9l7.500-7.500L16 9" />
      </svg>
      <svg width="25" height="18" viewBox="0 0 25 18" className="ml-[27px] shrink-0">
        <path d="M6.500 17A5.500 5.500 0 0 1 4.500 6.500 7.800 7.800 0 0 1 19 6a5.600 5.600 0 0 1 0 11z" fill="#8a8a8a" stroke="#1c1c1c" strokeWidth="1.400" />
        <path d="M3 15l11-7 8.500 4-1 3.500-3 .8H6z" fill="#e8e8e8" />
      </svg>
      <svg width="26" height="26" viewBox="0 0 26 26" fill="none" className="ml-[23px] shrink-0" stroke="#1c1c1c" strokeWidth="1.500">
        <path d="M1.500 9.500A11 11 0 0 1 21.500 7M23.500 1.500V8h-6.500M1.500 24v-6.500H8M3 18.500c2 3.500 4.500 5.500 8 6" />
        <circle cx="19" cy="18.500" r="5.800" fill="#fb9a0c" stroke="none" />
      </svg>
      <div className="ml-[22px] w-[44px] shrink-0 text-center text-[17px] leading-[23px]">
        <div>ENG</div>
        <div>IN</div>
      </div>
      <svg width="25" height="19" viewBox="0 0 25 19" fill="none" className="ml-[22px] shrink-0" stroke="#1c1c1c" strokeWidth="1.600">
        <path d="M1 6.500a16.500 16.500 0 0 1 23 0M4.500 10.300a11.500 11.500 0 0 1 16 0M8 14a6.500 6.500 0 0 1 9 0" />
        <circle cx="12.500" cy="16.700" r="1.900" fill="#1c1c1c" stroke="none" />
      </svg>
      <svg width="25" height="20" viewBox="0 0 25 20" fill="none" className="ml-[11px] shrink-0" stroke="#1c1c1c" strokeWidth="1.500">
        <path d="M1 7v6h4l6 5.500v-17L5 7zM14 6.500c1.500 2 1.500 5 0 7M17.300 4c3 3.500 3 8.500 0 12M20.500 1.500c4.500 5 4.500 12 0 17" strokeLinejoin="round" />
      </svg>
      <svg width="27" height="20" viewBox="0 0 27 20" className="mb-[2px] ml-[10px] shrink-0">
        <rect x="2" y="5" width="20.500" height="13.500" rx="3" fill="none" stroke="#1c1c1c" strokeWidth="1.500" />
        <path d="M4.500 16.500V10.500L8 7h12.500v9.500zM23.500 9h1.800a1 1 0 0 1 1 1v4a1 1 0 0 1-1 1h-1.800z" fill="#1c1c1c" />
        <path d="M6.500 0L1 8.500h3.500L2.500 14l7-7.500H6z" fill="#1c1c1c" stroke="#d9dbd5" strokeWidth="0.800" />
      </svg>
      <div className="ml-[16px] w-[100px] shrink-0 text-right text-[17px] leading-[24px]">
        <div>19:25</div>
        <div>22-04-2023</div>
      </div>
      <div className="ml-[12px] flex h-[24px] w-[24px] shrink-0 items-center justify-center rounded-full bg-[#0464bf] text-[13.500px] font-semibold text-white">4</div>
    </div>
  );
}

/* ---------- page ---------- */

export default function App() {
  return (
    <div className="flex h-[1080px] w-[1920px] flex-col overflow-hidden bg-[#f5f5f5]">
      <TitleBar />
      <MenuBar />
      <Toolbar />
      <div className="flex h-[804px] font-['Roboto',sans-serif] font-light">
        <DataPane />
        <CardsColumn />
        <div className="ml-[9px] flex w-[1347px] flex-col">
          <Shelves />
          <div className="mt-[9px] flex">
            <div className="h-[693px] w-[1107px] overflow-hidden border border-t-2 border-l-2 border-[#d4d4d4] bg-white">
              <Chart />
            </div>
            <RightCards />
          </div>
        </div>
      </div>
      <div className="font-['Roboto',sans-serif] font-light">
        <SheetTabs />
        <StatusBar />
      </div>
      <Taskbar />
    </div>
  );
}
